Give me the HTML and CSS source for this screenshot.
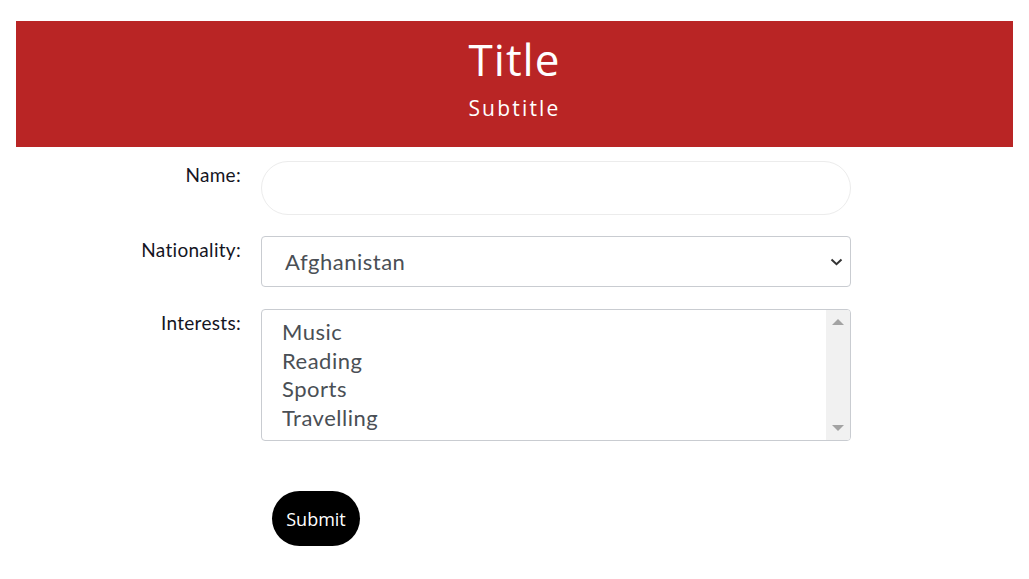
FILE: index.html
```html
<!DOCTYPE html>
<html lang="en">
<head>
<meta charset="utf-8">
<title>Form</title>
<link rel="stylesheet" href="styles.css">
</head>
<body>
<div class="page">
  <header class="banner">
    <h1 class="title">Title</h1>
    <p class="subtitle">Subtitle</p>
  </header>
  <form class="form">
    <label class="label" for="name">Name:</label>
    <div class="field"><input id="name" class="text-input" type="text"></div>

    <label class="label" for="nat">Nationality:</label>
    <div class="field">
      <div class="select">
        <span class="select-value">Afghanistan</span>
        <svg class="chevron" width="13" height="8" viewBox="0 0 13 8"><path d="M1.5 1.5 L6.5 6.2 L11.5 1.5" fill="none" stroke="#333" stroke-width="2"/></svg>
      </div>
    </div>

    <label class="label">Interests:</label>
    <div class="field">
      <div class="listbox" role="listbox">
        <ul class="options">
          <li>Music</li>
          <li>Reading</li>
          <li>Sports</li>
          <li>Travelling</li>
        </ul>
        <div class="scrollbar">
          <span class="arrow up"></span>
          <span class="arrow down"></span>
        </div>
      </div>
    </div>

    <div></div>
    <div class="actions"><button type="button" class="submit">Submit</button></div>
  </form>
</div>
</body>
</html>
```

FILE: styles.css
```css
html, body {
  margin: 0;
  padding: 0;
  background: #fff;
}
body {
  font-family: Lato, "Noto Sans", sans-serif;
}
.page {
  padding: 21px 16px 0;
}
.banner {
  background: #b92525;
  color: #fff;
  text-align: center;
  height: 126px;
  box-sizing: border-box;
  padding-top: 11px;
}
.title {
  margin: 0;
  font-family: "Open Sans", sans-serif;
  font-weight: 400;
  font-size: 44px;
  line-height: 54px;
  letter-spacing: 1px;
}
.subtitle {
  margin: 10px 0 0;
  font-family: "Open Sans", sans-serif;
  font-size: 21px;
  line-height: 24px;
  letter-spacing: 2.2px;
  font-weight: 500;
}
.form {
  display: grid;
  grid-template-columns: 225px 590px;
  column-gap: 20px;
  row-gap: 21px;
  padding-top: 14px;
}
.label {
  text-align: right;
  font-size: 19px;
  line-height: 22px;
  letter-spacing: 0.3px;
  color: #15151f;
  padding-top: 3px;
}
.text-input {
  display: block;
  width: 100%;
  height: 54px;
  box-sizing: border-box;
  border: 1px solid #ececec;
  border-radius: 27px;
  background: #fff;
  outline: none;
  padding: 0 20px;
  font-size: 20px;
}
.select {
  height: 51px;
  box-sizing: border-box;
  border: 1px solid #c9ccd1;
  border-radius: 4px;
  display: flex;
  align-items: center;
  justify-content: space-between;
  padding: 0 7px 0 23px;
  margin-bottom: 1px;
}
.select-value {
  font-size: 22px;
  letter-spacing: 0.5px;
  color: #4a4f55;
}
.listbox {
  height: 132px;
  box-sizing: border-box;
  border: 1px solid #c9ccd1;
  border-radius: 4px;
  display: flex;
  overflow: hidden;
}
.options {
  list-style: none;
  margin: 0;
  padding: 8px 0 0 20px;
  flex: 1;
  font-size: 22px;
  letter-spacing: 0.5px;
  line-height: 28.5px;
  color: #4a4f55;
}
.scrollbar {
  width: 24px;
  background: #f1f1f1;
  display: flex;
  flex-direction: column;
  justify-content: space-between;
  align-items: center;
  padding: 9px 0;
}
.arrow {
  width: 0;
  height: 0;
  border-left: 6px solid transparent;
  border-right: 6px solid transparent;
}
.arrow.up {
  border-bottom: 6px solid #a3a3a3;
}
.arrow.down {
  border-top: 6px solid #a3a3a3;
}
.actions {
  padding: 29px 0 0 11px;
}
.submit {
  width: 88px;
  height: 55px;
  border: none;
  border-radius: 28px;
  background: #000;
  color: #fff;
  font-family: "Open Sans", sans-serif;
  font-size: 18px;
  padding: 0;
  cursor: pointer;
}
```
